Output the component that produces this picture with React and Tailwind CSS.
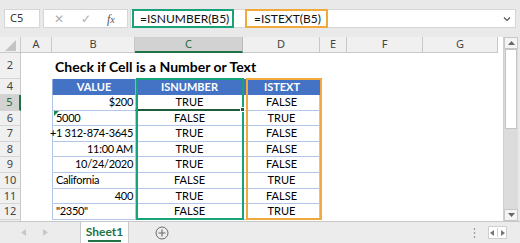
import React from "react";

const COLS = [
  { k: "A", w: 31 },
  { k: "B", w: 83 },
  { k: "C", w: 108 },
  { k: "D", w: 77 },
  { k: "E", w: 27 },
  { k: "F", w: 76 },
  { k: "G", w: 75 },
];

const DATA = [
  { r: 5, v: "$200", a: "right", n: "TRUE", t: "FALSE", h: 16 },
  { r: 6, v: "5000", a: "left", n: "FALSE", t: "TRUE", h: 15, tri: true },
  { r: 7, v: "+1 312-874-3645", a: "right", n: "TRUE", t: "FALSE", h: 16 },
  { r: 8, v: "11:00 AM", a: "right", n: "TRUE", t: "FALSE", h: 15 },
  { r: 9, v: "10/24/2020", a: "right", n: "TRUE", t: "FALSE", h: 16 },
  { r: 10, v: "California", a: "left", n: "FALSE", t: "TRUE", h: 16 },
  { r: 11, v: "400", a: "right", n: "TRUE", t: "FALSE", h: 15 },
  { r: 12, v: '"2350"', a: "left", n: "FALSE", t: "TRUE", h: 16 },
];

const cellFont = { fontFamily: "Lato, 'Open Sans', sans-serif" };
const uiFont = { fontFamily: "'Noto Sans', 'Open Sans', sans-serif" };

function RowHead({ n, h, active }) {
  return (
    <div
      className={`w-[21px] shrink-0 flex items-center justify-center text-[11px] border-b border-[#d4d4d4] ${
        active ? "bg-[#d2d2d2] text-[#1e6b40] border-r-2 border-r-[#217346]" : "bg-[#f0f0f0] text-[#444] border-r border-r-[#c8c8c8]"
      }`}
      style={{ ...uiFont, height: h }}
    >
      {n}
    </div>
  );
}

export default function App() {
  return (
    <div className="w-[520px] h-[243px] bg-[#e9e9e9] overflow-hidden flex flex-col select-none">
      {/* Formula bar */}
      <div className="h-[37px] shrink-0 flex items-start pt-[9px] pl-[4px] pr-[4px]">
        <div
          className="w-[36px] h-[19px] bg-white border border-[#d6d6d6] flex items-center pl-[5px] text-[11px] text-[#333]"
          style={uiFont}
        >
          C5
        </div>
        <div className="w-[85px] h-[19px] ml-[3px] bg-white border border-[#d6d6d6] flex items-center text-[#b0b0b0]">
          <span className="ml-[10px] text-[12px] leading-none">✕</span>
          <span className="ml-[17px] text-[12px] leading-none">✓</span>
          <span
            className="ml-[16px] text-[12px] italic text-[#555] leading-none"
            style={{ fontFamily: "'Liberation Serif', serif" }}
          >
            f<span className="text-[10px]">x</span>
          </span>
        </div>
        <div className="flex-1 h-[19px] ml-[2px] bg-white border border-[#d6d6d6] flex items-center relative">
          <div
            className="ml-[1px] w-[102px] h-[19px] border-2 border-[#17a37a] flex items-center pl-[6px] text-[12px] text-[#111] whitespace-nowrap"
            style={cellFont}
          >
            =ISNUMBER(B5)
          </div>
          <div
            className="ml-[11px] w-[83px] h-[19px] border-2 border-[#f2a93b] flex items-center pl-[7px] text-[12px] text-[#111] whitespace-nowrap"
            style={cellFont}
          >
            =ISTEXT(B5)
          </div>
          <svg className="absolute right-[4px] top-[6px]" width="8" height="6" viewBox="0 0 8 6">
            <path d="M1 1.5 L4 4.5 L7 1.5" stroke="#555" strokeWidth="1.2" fill="none" />
          </svg>
        </div>
      </div>

      {/* Sheet area */}
      <div className="flex h-[184px] shrink-0">
        <div className="w-[498px] shrink-0 bg-white flex flex-col">
          {/* Column headers */}
          <div className="flex h-[16px] shrink-0">
            <div className="w-[21px] bg-[#f0f0f0] border-r border-b border-[#c8c8c8] relative">
              <svg className="absolute left-[5px] top-[3px]" width="11" height="11" viewBox="0 0 11 11">
                <path d="M11 0 L11 11 L0 11 Z" fill="#c4c4c4" />
              </svg>
            </div>
            {COLS.map((c) => (
              <div
                key={c.k}
                className={`shrink-0 flex items-center justify-center text-[11px] border-r ${
                  c.k === "C"
                    ? "bg-[#d2d2d2] text-[#1e6b40] border-b-2 border-b-[#217346] border-r-[#b8b8b8]"
                    : "bg-[#f0f0f0] text-[#444] border-b border-[#c8c8c8]"
                }`}
                style={{ ...uiFont, width: c.w }}
              >
                {c.k}
              </div>
            ))}
          </div>

          {/* Row 2 */}
          <div className="flex h-[26px] shrink-0">
            <RowHead n={2} h={26} />
            <div className="w-[31px] shrink-0" />
            <div
              className="flex items-center pl-[3px] pt-[1px] text-[14px] font-bold text-black whitespace-nowrap"
              style={cellFont}
            >
              Check if Cell is a Number or Text
            </div>
          </div>

          {/* Table */}
          <div className="flex">
            <div className="flex flex-col">
              <RowHead n={4} h={16} />
              {DATA.map((d) => (
                <RowHead key={d.r} n={d.r} h={d.h} active={d.r === 5} />
              ))}
            </div>
            <div className="w-[31px] shrink-0" />
            <div className="relative flex flex-col" style={cellFont}>
              <div className="flex h-[16px] text-[11px] font-bold text-white">
                <div className="w-[83px] bg-[#4472c4] border-l border-[#8ea9db] flex items-center justify-center">VALUE</div>
                <div className="w-[108px] bg-[#4472c4] border-l border-[#8ea9db] flex items-center justify-center">ISNUMBER</div>
                <div className="w-[77px] bg-[#4472c4] border-l border-[#8ea9db] flex items-center justify-center">ISTEXT</div>
              </div>
              {DATA.map((d) => (
                <div key={d.r} className="flex text-[11px] text-black whitespace-nowrap" style={{ height: d.h }}>
                  <div
                    className={`relative w-[83px] border-l border-b border-[#b4c6e7] flex items-center pl-[3px] pr-[2px] tracking-[-0.3px] ${
                      d.a === "right" ? "justify-end" : "justify-start"
                    }`}
                  >
                    {d.tri && (
                      <svg className="absolute left-[1px] top-[0px]" width="5" height="5" viewBox="0 0 5 5">
                        <path d="M0 0 L5 0 L0 5 Z" fill="#1e8a4a" />
                      </svg>
                    )}
                    {d.v}
                  </div>
                  <div
                    className={`relative w-[108px] border-l border-b flex items-center justify-center ${
                      d.r === 5 ? "border-b-2 border-b-[#1d5c3a] border-l-[#b4c6e7]" : "border-[#b4c6e7]"
                    }`}
                  >
                    {d.n}
                  </div>
                  <div className="w-[77px] border-l border-r border-b border-[#b4c6e7] flex items-center justify-center">
                    {d.t}
                  </div>
                </div>
              ))}
              {/* highlight boxes */}
              <div className="absolute left-[84px] top-[-1px] w-[108px] h-[142px] border-2 border-[#17a37a] pointer-events-none" />
              <div className="absolute left-[194px] top-[-1px] w-[76px] h-[142px] border-2 border-[#f2a93b] pointer-events-none" />
              <div className="absolute left-[188px] top-[28px] w-[5px] h-[5px] bg-[#1d5c3a] border border-white" />
            </div>
          </div>
          <div className="flex-1 flex">
            <div className="w-[21px] bg-[#f0f0f0] border-r border-[#c8c8c8]" />
          </div>
        </div>
        <div className="w-[5px] bg-white" />
        {/* Vertical scrollbar */}
        <div className="w-[15px] bg-[#dcdcdc] flex flex-col border-l border-[#cfcfcf]">
          <div className="h-[12px] bg-[#f4f4f4] border border-[#c8c8c8] flex items-center justify-center">
            <svg width="7" height="4" viewBox="0 0 7 4"><path d="M0 4 L3.5 0 L7 4 Z" fill="#666" /></svg>
          </div>
          <div className="h-[80px] mx-[1px] bg-white border border-[#c4c4c4]" />
          <div className="flex-1" />
          <div className="h-[12px] bg-[#f4f4f4] border border-[#c8c8c8] flex items-center justify-center">
            <svg width="7" height="4" viewBox="0 0 7 4"><path d="M0 0 L3.5 4 L7 0 Z" fill="#666" /></svg>
          </div>
        </div>
        <div className="flex-1" />
      </div>

      {/* Tabs bar */}
      <div className="flex-1 flex items-stretch border-t border-[#c8c8c8] bg-[#ececec] relative">
        <div className="w-[80px] flex items-center text-[#c4c4c4]">
          <svg className="ml-[21px]" width="5" height="7" viewBox="0 0 5 7"><path d="M5 0 L0 3.5 L5 7 Z" fill="#c8c8c8" /></svg>
          <svg className="ml-[17px]" width="5" height="7" viewBox="0 0 5 7"><path d="M0 0 L5 3.5 L0 7 Z" fill="#c8c8c8" /></svg>
        </div>
        <div
          className="w-[49px] bg-white border-x border-[#c8c8c8] flex flex-col items-center justify-center relative"
          style={cellFont}
        >
          <span className="text-[12px] font-bold text-[#217346] mt-[-1px]">Sheet1</span>
          <div className="absolute bottom-[1px] left-[7px] right-[7px] h-[2px] bg-[#217346]" />
        </div>
        <div className="ml-[26px] flex items-center">
          <svg width="14" height="14" viewBox="0 0 14 14">
            <circle cx="7" cy="7" r="6" stroke="#6a6a6a" strokeWidth="1" fill="none" />
            <path d="M7 3.5 V10.5 M3.5 7 H10.5" stroke="#6a6a6a" strokeWidth="1.1" />
          </svg>
        </div>
        <div className="flex-1" />
        <div className="flex items-center mr-[13px]">
          <svg width="3" height="12" viewBox="0 0 3 12">
            <circle cx="1.5" cy="2" r="0.8" fill="#777" />
            <circle cx="1.5" cy="6" r="0.8" fill="#777" />
            <circle cx="1.5" cy="10" r="0.8" fill="#777" />
          </svg>
          <div className="ml-[12px] w-[19px] h-[13px] bg-white border border-[#cfcfcf] flex items-center justify-around">
            <svg width="4" height="6" viewBox="0 0 4 6"><path d="M4 0 L0 3 L4 6 Z" fill="#777" /></svg>
            <div className="w-px h-[9px] bg-[#cfcfcf]" />
            <svg width="4" height="6" viewBox="0 0 4 6"><path d="M0 0 L4 3 L0 6 Z" fill="#777" /></svg>
          </div>
        </div>
      </div>
    </div>
  );
}
